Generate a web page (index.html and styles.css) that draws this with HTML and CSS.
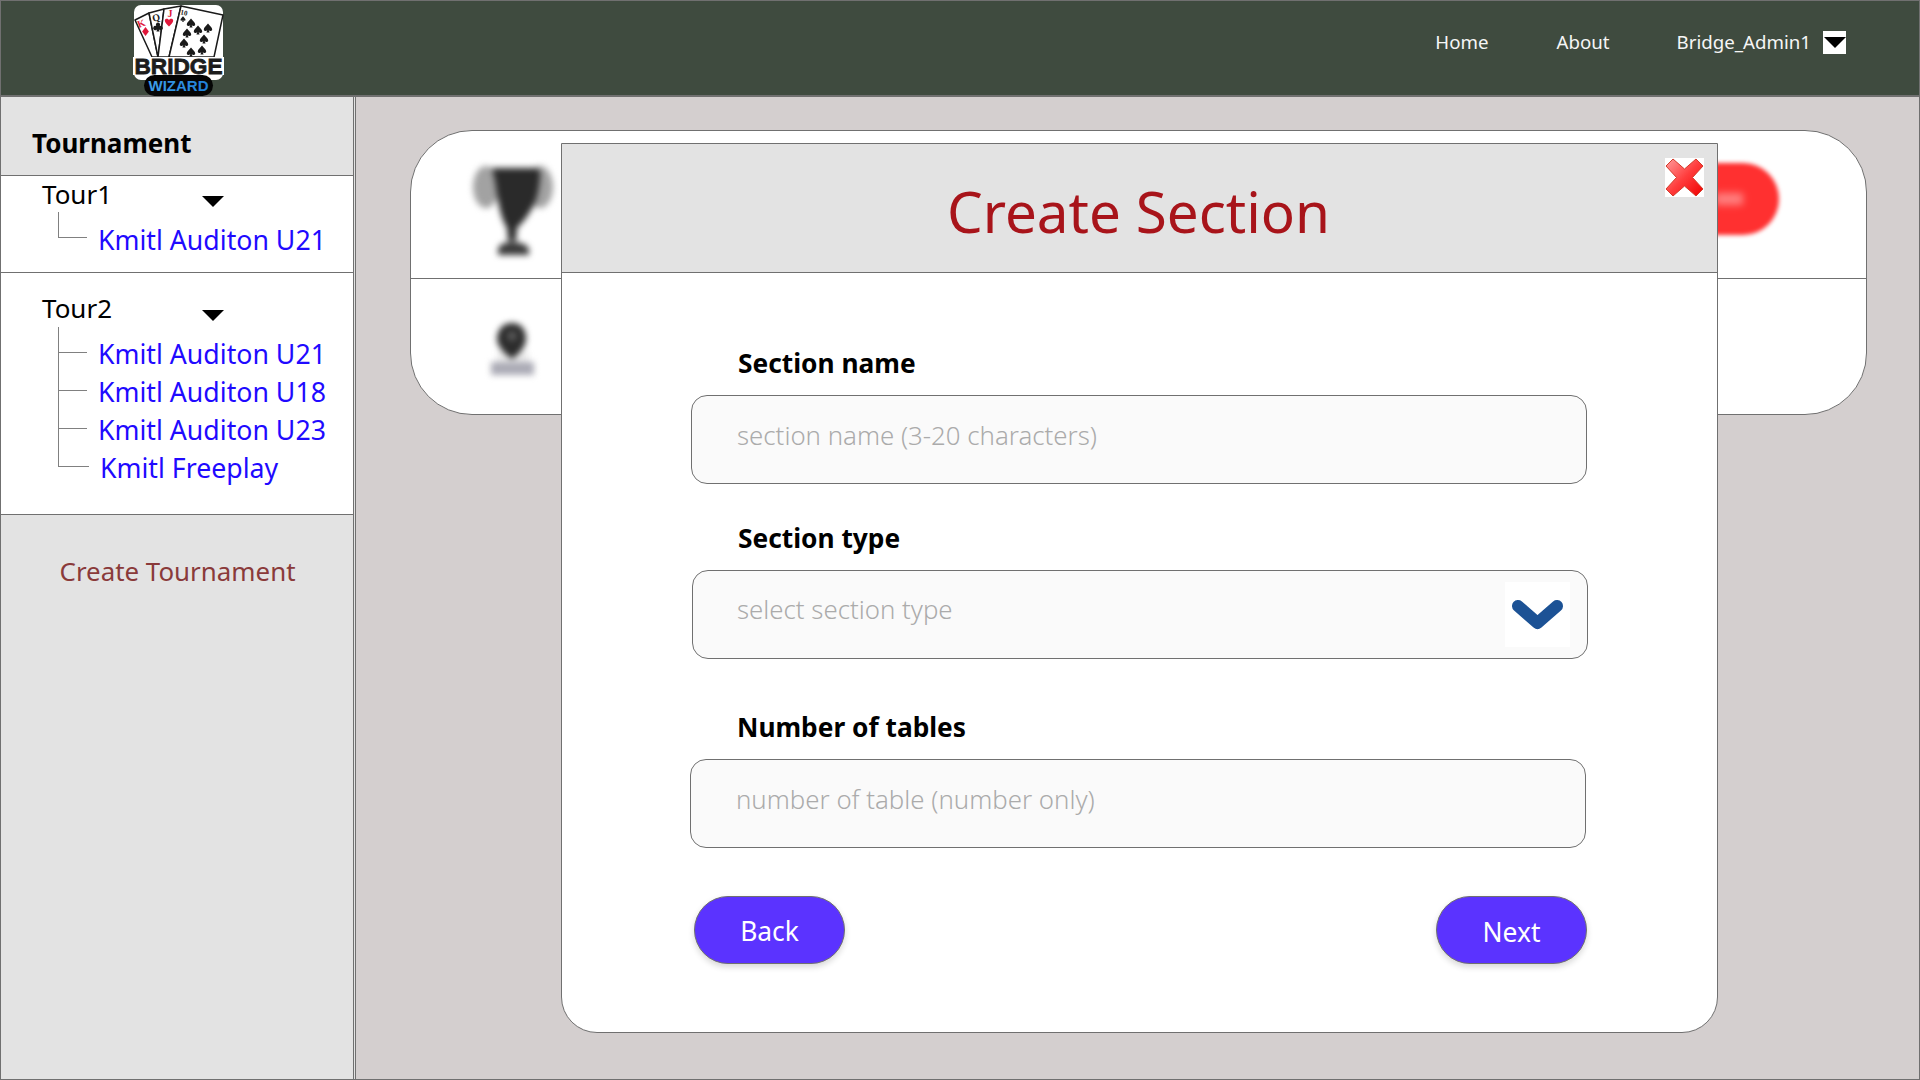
FILE: index.html
```html
<!DOCTYPE html>
<html lang="en">
<head>
<meta charset="utf-8">
<title>Create Section</title>
<link rel="stylesheet" href="styles.css">
</head>
<body>
<div class="app">
  <header class="topbar">
    <svg class="logo" viewBox="0 0 91 92" aria-label="Bridge Wizard">
      <defs>
        <path id="spade" d="M0 -4.5 C2 -2 4.2 -0.6 4.2 1.4 C4.2 3 2 3.4 0.7 2.2 L1.6 4.5 H-1.6 L-0.7 2.2 C-2 3.4 -4.2 3 -4.2 1.4 C-4.2 -0.6 -2 -2 0 -4.5 Z"/>
        <path id="diamond" d="M0 -4.5 L3.4 0 L0 4.5 L-3.4 0 Z"/>
        <path id="heart" d="M0 4.5 C-2 2.4 -4.2 0.8 -4.2 -1.4 C-4.2 -3.6 -1.2 -4 0 -2 C1.2 -4 4.2 -3.6 4.2 -1.4 C4.2 0.8 2 2.4 0 4.5 Z"/>
        <path id="club" d="M0 -4.5 A2.2 2.2 0 0 1 1.7 -1 A2.2 2.2 0 1 1 0.8 2.2 L1.6 4.5 H-1.6 L-0.8 2.2 A2.2 2.2 0 1 1 -1.7 -1 A2.2 2.2 0 0 1 0 -4.5 Z"/>
        <linearGradient id="wiz" x1="0" y1="0" x2="1" y2="0">
          <stop offset="0" stop-color="#3ea0ea"/>
          <stop offset="1" stop-color="#1f7fd6"/>
        </linearGradient>
      </defs>
      <rect x="1" y="0" width="89" height="75" rx="7" fill="#fff"/>
      <g fill="#fff" stroke="#1a1a1a" stroke-width="1.5" stroke-linejoin="round">
        <path d="M2 15 L16 8 L25 52 H19 Z"/>
        <path d="M16 8 L31 4 L25 52 Z"/>
        <path d="M31 4 L48 1 L36 52 H25 Z"/>
        <path d="M48 1 L90 10 L81 52 H36 Z"/>
      </g>
      <text class="lg-card lg-red" x="8" y="22" transform="rotate(-20 8 18)" text-anchor="middle">K</text>
      <use href="#diamond" x="12.5" y="26.5" class="lg-red"/>
      <text class="lg-card" x="23" y="16" transform="rotate(-12 23 12)" text-anchor="middle">Q</text>
      <use href="#club" x="25" y="22" class="lg-dark"/>
      <text class="lg-card lg-red" x="37" y="12" text-anchor="middle">J</text>
      <use href="#heart" x="36" y="17" class="lg-red"/>
      <text class="lg-ten" x="51" y="10" transform="rotate(12 51 7)" text-anchor="middle">10</text>
      <g class="lg-dark">
        <use href="#spade" transform="translate(50 14) scale(.6)"/>
        <use href="#spade" x="58" y="18"/>
        <use href="#spade" x="75" y="23"/>
        <use href="#spade" x="65" y="25"/>
        <use href="#spade" x="54" y="28"/>
        <use href="#spade" x="71" y="34"/>
        <use href="#spade" x="51" y="38"/>
        <use href="#spade" x="58" y="47"/>
        <use href="#spade" x="69" y="45"/>
      </g>
      <rect x="0" y="52" width="91" height="18" fill="#fff"/>
      <text class="lg-bridge" x="45.5" y="69" text-anchor="middle" textLength="88" lengthAdjust="spacingAndGlyphs">BRIDGE</text>
      <rect x="11" y="70" width="69" height="21" rx="10.5" fill="#050505"/>
      <text class="lg-wizard" x="45.5" y="86" text-anchor="middle" textLength="60" lengthAdjust="spacingAndGlyphs">WIZARD</text>
    </svg>
    <nav class="topnav">
      <a class="nav-home">Home</a>
      <a class="nav-about">About</a>
      <a class="nav-user">Bridge_Admin1</a>
      <span class="user-caret"><span class="caret"></span></span>
    </nav>
  </header>

  <div class="workspace">
    <aside class="sidebar">
      <h2 class="side-title">Tournament</h2>
      <section class="tour tour-one">
        <div class="tour-head"><span class="tour-name">Tour1</span><span class="caret"></span></div>
        <ul class="tree">
          <li class="leaf leaf-short"><span class="branch"></span><a>Kmitl Auditon U21</a></li>
        </ul>
      </section>
      <section class="tour tour-two">
        <div class="tour-head"><span class="tour-name">Tour2</span><span class="caret"></span></div>
        <ul class="tree">
          <li class="leaf leaf-short"><span class="branch"></span><a>Kmitl Auditon U21</a></li>
          <li class="leaf"><span class="branch"></span><a>Kmitl Auditon U18</a></li>
          <li class="leaf"><span class="branch"></span><a>Kmitl Auditon U23</a></li>
          <li class="leaf leaf-shift"><span class="branch"></span><a>Kmitl Freeplay</a></li>
        </ul>
      </section>
      <a class="create-tour">Create Tournament</a>
    </aside>

    <main class="main">
      <div class="card">
        <div class="card-row card-top">
          <svg class="trophy" viewBox="0 0 84 92">
            <ellipse cx="15" cy="22" rx="13" ry="21" fill="#a2a2a2"/>
            <ellipse cx="69" cy="22" rx="13" ry="21" fill="#a2a2a2"/>
            <path d="M22 3 H64 C70 3 70 8 68 22 C66 38 56 54 46 63 L45 76 H37 L36 63 C30 54 27 38 25 22 C23 8 20 3 22 3 Z" fill="#2a2a2a"/>
            <path d="M27 90 V84 Q29 77 41 77 Q55 77 58 84 V90 Z" fill="#3a3a3a"/>
          </svg>
          <div class="red-pill"><span class="pill-glow"></span></div>
        </div>
        <div class="card-row card-bottom">
          <svg class="pin" viewBox="0 0 46 56">
            <rect x="8" y="30" width="32" height="12" fill="#ececec"/>
            <rect x="2" y="40" width="43" height="13" fill="#acacb6"/>
            <path d="M23 1 C12 1 8 10 8 17 C8 25 17 33 23 37 C29 33 37 25 37 17 C37 10 34 1 23 1 Z" fill="#2c2c2c"/>
            <circle cx="23" cy="14" r="5" fill="#5a5a5a"/>
          </svg>
        </div>
      </div>
    </main>
  </div>

  <div class="modal">
    <div class="modal-head">
      <h1 class="modal-title">Create Section</h1>
      <button class="close" aria-label="Close">
        <svg viewBox="0 0 39 39" width="39" height="39">
          <defs>
            <linearGradient id="xfill" x1="0" y1="0" x2="1" y2="1">
              <stop offset="0" stop-color="#ff9c9c"/>
              <stop offset="0.5" stop-color="#ff3d3d"/>
              <stop offset="1" stop-color="#f00000"/>
            </linearGradient>
          </defs>
          <path d="M8 1 L19.5 11 L31 1 L38 8 L27.5 19.5 L38 31 L31 38 L19.5 28 L8 38 L1 31 L11.5 19.5 L1 8 Z" fill="url(#xfill)" stroke="#d43a2a" stroke-width="1" stroke-linejoin="round"/>
        </svg>
      </button>
    </div>
    <form class="modal-form">
      <div class="field field-name">
        <label class="field-label">Section name</label>
        <input class="field-box field-input" placeholder="section name (3-20 characters)">
      </div>
      <div class="field field-type">
        <label class="field-label">Section type</label>
        <div class="field-box field-select">
          <span class="placeholder">select section type</span>
          <span class="chevron-box">
            <svg viewBox="0 0 65 65" width="65" height="65"><path d="M13 24 L32.5 41 L52 24" fill="none" stroke="#1c5295" stroke-width="12" stroke-linecap="round" stroke-linejoin="round"/></svg>
          </span>
        </div>
      </div>
      <div class="field field-tables">
        <label class="field-label">Number of tables</label>
        <input class="field-box field-input" placeholder="number of table (number only)">
      </div>
      <div class="actions">
        <button type="button" class="btn">Back</button>
        <button type="button" class="btn btn-next">Next</button>
      </div>
    </form>
  </div>
</div>
</body>
</html>
```
FILE: styles.css
```css
* { box-sizing: border-box; }
html, body { margin: 0; padding: 0; }
body {
  font-family: "Noto Sans", "Open Sans", sans-serif;
  color: #000;
  overflow: hidden;
}
.app {
  position: relative;
  width: 1920px;
  height: 1080px;
  border: 1px solid #707070;
  display: flex;
  flex-direction: column;
  background: #e3e3e3;
}
ul { list-style: none; margin: 0; padding: 0; }

/* top bar */
.topbar {
  height: 96px;
  flex: none;
  background: #3f4b3f;
  border-bottom: 2px solid #707070;
  display: flex;
  align-items: flex-start;
  padding: 4px 73px 0 132px;
}
.logo { width: 91px; height: 92px; display: block; flex: none; }
.lg-card { font: 700 10px "Liberation Serif", serif; fill: #222; }
.lg-ten { font: 700 7px "Liberation Serif", serif; fill: #222; }
.lg-red { fill: #e0173a; }
.lg-dark { fill: #1a1a1a; }
.lg-bridge { font: 700 22.6px "Liberation Sans", sans-serif; fill: #1c1c1c; stroke: #1c1c1c; stroke-width: 0.8px; }
.lg-wizard { font: 700 15px "Liberation Sans", sans-serif; fill: url(#wiz); }
.topnav {
  margin-left: auto;
  display: flex;
  align-items: center;
  height: 60px;
  margin-top: 6px;
  color: #f6f6f6;
  font-size: 18.7px;
}
.nav-about { margin-left: 68px; }
.nav-user { margin-left: 67px; }
.user-caret {
  width: 23px;
  height: 23px;
  margin-left: 12px;
  margin-top: 3px;
  background: #fff;
  display: flex;
  align-items: center;
  justify-content: center;
}
.caret {
  display: block;
  width: 0;
  height: 0;
  border-left: 11px solid transparent;
  border-right: 11px solid transparent;
  border-top: 11px solid #000;
}

/* sidebar */
.workspace { flex: 1; display: flex; min-height: 0; }
.sidebar { width: 353px; flex: none; background: #e3e3e3; border-right: 1px solid #707070; }
.side-title {
  margin: 0;
  height: 79px;
  padding: 13px 0 0 31px;
  display: flex;
  align-items: center;
  font-size: 26px;
  font-weight: 700;
  border-bottom: 1px solid #707070;
}
.tour { background: #fff; border-bottom: 1px solid #707070; }
.tour-one { height: 97px; }
.tour-two { height: 242px; padding-top: 17px; }
.tour-head {
  height: 36px;
  display: flex;
  align-items: center;
  padding-left: 41px;
}
.tour-name { width: 160px; font-size: 26px; color: #000; }
.tour-head .caret { margin-top: 15px; }
.tour-two .tree { margin-top: 1px; }
.tree { padding-left: 57px; color: #1f0aff; }
.leaf { display: flex; height: 38px; white-space: nowrap; }
.leaf a { margin-top: 17px; line-height: 44px; height: 38px; font-size: 26.7px; }
.branch {
  flex: none;
  width: 29px;
  height: 38px;
  margin-right: 11px;
  border-left: 1px solid #808080;
  border-bottom: 1px solid #808080;
}
.leaf-short { height: 26px; }
.leaf-short .branch { height: 26px; }
.leaf-short a { margin-top: 5px; }
.tour-one .leaf-short a { margin-top: 6px; }
.leaf-shift .branch { width: 31px; }
.create-tour {
  display: block;
  margin-top: 38px;
  padding-left: 1px;
  text-align: center;
  color: #8a3a3a;
  font-size: 25.9px;
  line-height: 36px;
}

/* background content */
.main {
  flex: 1;
  background: #d4cfcf;
  margin-left: 1px;
  border-left: 1px solid #707070;
  padding: 33px 52px 0 54px;
}
.card {
  width: 1457px;
  height: 285px;
  background: #fff;
  border: 1px solid #707070;
  border-radius: 62px;
  overflow: hidden;
}
.card-row { display: flex; }
.card-top {
  height: 148px;
  border-bottom: 1px solid #707070;
  justify-content: space-between;
  padding: 34px 87px 0 60px;
}
.trophy { width: 84px; height: 92px; filter: blur(3px); flex: none; }
.red-pill {
  width: 180px;
  height: 72px;
  margin-top: -2px;
  background: #ff3030;
  border-radius: 36px;
  filter: blur(2px);
  display: flex;
  align-items: center;
  justify-content: flex-end;
  padding-right: 36px;
}
.pill-glow { width: 28px; height: 12px; background: #ff8080; filter: blur(3px); }
.card-bottom { padding: 43px 0 0 78px; }
.pin { width: 46px; height: 56px; filter: blur(3px); flex: none; }

/* modal */
.modal {
  position: absolute;
  left: 560px;
  top: 142px;
  width: 1157px;
  height: 890px;
  background: #fff;
  border: 1px solid #707070;
  border-radius: 0 0 36px 36px;
  display: flex;
  flex-direction: column;
}
.modal-head {
  position: relative;
  height: 129px;
  flex: none;
  background: #e3e3e3;
  border-bottom: 1px solid #707070;
  display: flex;
  align-items: center;
  justify-content: center;
}
.modal-title {
  margin: 0 2px 0 0;
  color: #a8141a;
  font-size: 56.6px;
  font-weight: 400;
  line-height: 1;
  padding-top: 6px;
}
.close {
  position: absolute;
  left: 1103px;
  top: 14px;
  width: 39px;
  height: 39px;
  padding: 0;
  border: 0;
  background: #fff;
  display: block;
}
.close svg { display: block; }
.modal-form { width: 898px; margin-left: 129px; display: flex; flex-direction: column; }
.field-label {
  display: block;
  height: 36px;
  line-height: 36px;
  padding-left: 47px;
  margin-bottom: 14px;
  font-size: 26.3px;
  font-weight: 700;
}
.field-type .field-label { padding-left: 46px; }
.field-box {
  display: block;
  width: 896px;
  height: 89px;
  background: #fafafa;
  border: 1px solid #707070;
  border-radius: 16px;
}
.field-input {
  padding: 0 45px 10px;
  font: 300 25.8px "Noto Sans", "Open Sans", sans-serif;
  color: #333;
  outline: none;
}
.field-input::placeholder, .placeholder { color: #ababab; font-weight: 300; font-size: 25.8px; }
.field-name { margin-top: 72px; }
.field-type { margin-top: 36px; margin-left: 1px; }
.field-tables { margin-top: 50px; margin-left: -1px; }
.field-tables .field-label { padding-left: 47px; margin-bottom: 14px; }
.field-tables .field-box { height: 89px; }
.field-select {
  display: flex;
  align-items: center;
  justify-content: space-between;
  padding: 0 17px 0 44px;
}
.placeholder { padding-bottom: 11px; }
.chevron-box { width: 65px; height: 65px; background: #fff; display: block; }
.chevron-box svg { display: block; }
.actions {
  display: flex;
  justify-content: space-between;
  margin-top: 48px;
  padding: 0 0 0 3px;
  width: 896px;
}
.btn {
  width: 151px;
  height: 68px;
  border: 1px solid #707070;
  border-radius: 34px;
  background: #5b33ff;
  color: #fff;
  font: 400 26.4px "Noto Sans", "Open Sans", sans-serif;
  box-shadow: 0 3px 6px rgba(0,0,0,0.16);
  padding: 2px 0 0;
}
.btn-next { padding-top: 4px; }
```
